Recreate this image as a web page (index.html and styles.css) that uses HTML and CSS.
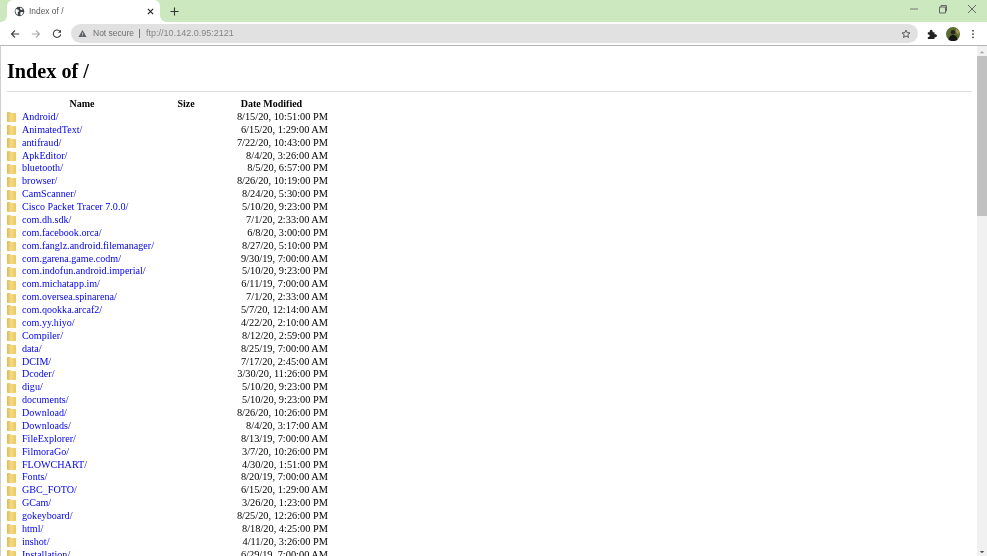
FILE: index.html
```html
<!DOCTYPE html>
<html lang="en">
<head>
<meta charset="utf-8">
<title>Index of /</title>
<link rel="stylesheet" href="styles.css">
</head>
<body>
<svg class="defs" width="0" height="0" aria-hidden="true">
  <defs>
    <linearGradient id="fg" x1="0" y1="0" x2="1" y2="0">
      <stop offset="0" stop-color="#dfbb52"/>
      <stop offset="0.45" stop-color="#f3da88"/>
      <stop offset="1" stop-color="#ebc95f"/>
    </linearGradient>
    <symbol id="folder" viewBox="0 0 9 10">
      <path d="M0 .8C0 .3.3 0 .8 0h2.400l1 1H8.200c.5 0 .8.300.8.800V9.200c0 .5-.3.800-.8.800H.8C.3 10 0 9.700 0 9.200Z" fill="url(#fg)"/>
    </symbol>
  </defs>
</svg>
<div class="window">
  <header class="tabstrip">
    <div class="tab">
      <svg class="favicon" viewBox="0 0 12 12"><circle cx="6" cy="6" r="5.200" fill="#3c4043"/><path d="M2 3.200 5 4l.4 1.800L4 7 4.300 9.500 2.800 9 1.500 6ZM6.500 1.500 9.600 3 8.600 4.300 6.800 3.800ZM7.500 6.500h2.700L9 9.500 7.200 10.300 6.800 8Z" fill="#fff"/></svg>
      <span class="tab-title">Index of /</span>
      <svg class="tab-close" viewBox="0 0 8 8"><path d="M1 1l6 6M7 1 1 7" stroke="#222" stroke-width="1.300" fill="none"/></svg>
    </div>
    <svg class="new-tab" viewBox="0 0 10 10"><path d="M5 .5v9M.5 5h9" stroke="#333" stroke-width="1.200" fill="none"/></svg>
    <div class="win-controls">
      <svg viewBox="0 0 10 10"><path d="M1 5h8" stroke="#777" fill="none"/></svg>
      <svg viewBox="0 0 10 10"><path d="M1.500 3h6v6h-6ZM3 3V1.500h5.500V7H7.500" stroke="#666" fill="none"/></svg>
      <svg viewBox="0 0 10 10"><path d="M1 1l8 8M9 1l-8 8" stroke="#666" fill="none"/></svg>
    </div>
  </header>
  <nav class="toolbar">
    <svg class="nav-icon" viewBox="0 0 12 12"><path d="M11 6H2M6 1.800 1.800 6 6 10.200" stroke="#3c4043" stroke-width="1.300" fill="none"/></svg>
    <svg class="nav-icon" viewBox="0 0 12 12"><path d="M1 6h9M6 1.800 10.200 6 6 10.200" stroke="#a8a8a8" stroke-width="1.300" fill="none"/></svg>
    <svg class="nav-icon" viewBox="0 0 12 12"><path d="M10 3.500A4.500 4.500 0 1 0 10.500 6.500" stroke="#3c4043" stroke-width="1.300" fill="none"/><path d="M10.800 1v3.600H7.200Z" fill="#3c4043"/></svg>
    <div class="omnibox">
      <svg class="warn" viewBox="0 0 10 10"><path d="M5 1 9.500 9H.5Z" fill="#5f6368"/><path d="M5 4v2.500M5 7.200v.9" stroke="#e2e2e2" stroke-width=".8"/></svg>
      <span class="not-secure">Not secure</span>
      <span class="divider"></span>
      <span class="url">ftp://10.142.0.95:2121</span>
      <svg class="star" viewBox="0 0 12 12"><path d="M6 1.300 7.400 4.400l3.400.3-2.600 2.200.8 3.300L6 8.400 3 10.200l.8-3.300L1.200 4.700l3.400-.3Z" stroke="#3c4043" fill="none"/></svg>
    </div>
    <svg class="puzzle" viewBox="0 0 12 12"><path d="M1 4h2.200C3 2 4 1 5 1s2 1 1.800 3H9v2.200c2-.2 3 .6 3 1.800s-1 2-3 1.800V12H1V9.500c1.500.2 2.200-.5 2.200-1.500S2.500 6.300 1 6.500Z" fill="#222"/></svg>
    <svg class="avatar" viewBox="0 0 14 14"><circle cx="7" cy="7" r="7" fill="#5c6b2f"/><path d="M2.500 13C3 9 5 8 7 8s4 1 4.500 5L7 14.500Z" fill="#161616"/><circle cx="7" cy="5.200" r="2.200" fill="#27231f"/><path d="M10 1.500 13 4 12.500 8 10 5Z" fill="#a39a4a"/></svg>
    <svg class="menu" viewBox="0 0 4 12"><circle cx="2" cy="2" r="1.050" fill="#333"/><circle cx="2" cy="6" r="1.050" fill="#333"/><circle cx="2" cy="10" r="1.050" fill="#333"/></svg>
  </nav>
  <div class="viewport">
    <main class="content">
      <h1 class="title">Index of /</h1>
      <hr class="rule">
      <div class="listing">
        <div class="row head"><span class="name-h">Name</span><span class="size-h">Size</span><span class="date-h">Date Modified</span></div>
        <div class="row"><span class="name"><svg class="folder"><use href="#folder"/></svg><a href="#">Android/</a></span><span></span><span class="date">8/15/20, 10:51:00 PM</span></div>
        <div class="row"><span class="name"><svg class="folder"><use href="#folder"/></svg><a href="#">AnimatedText/</a></span><span></span><span class="date">6/15/20, 1:29:00 AM</span></div>
        <div class="row"><span class="name"><svg class="folder"><use href="#folder"/></svg><a href="#">antifraud/</a></span><span></span><span class="date">7/22/20, 10:43:00 PM</span></div>
        <div class="row"><span class="name"><svg class="folder"><use href="#folder"/></svg><a href="#">ApkEditor/</a></span><span></span><span class="date">8/4/20, 3:26:00 AM</span></div>
        <div class="row"><span class="name"><svg class="folder"><use href="#folder"/></svg><a href="#">bluetooth/</a></span><span></span><span class="date">8/5/20, 6:57:00 PM</span></div>
        <div class="row"><span class="name"><svg class="folder"><use href="#folder"/></svg><a href="#">browser/</a></span><span></span><span class="date">8/26/20, 10:19:00 PM</span></div>
        <div class="row"><span class="name"><svg class="folder"><use href="#folder"/></svg><a href="#">CamScanner/</a></span><span></span><span class="date">8/24/20, 5:30:00 PM</span></div>
        <div class="row"><span class="name"><svg class="folder"><use href="#folder"/></svg><a href="#">Cisco Packet Tracer 7.0.0/</a></span><span></span><span class="date">5/10/20, 9:23:00 PM</span></div>
        <div class="row"><span class="name"><svg class="folder"><use href="#folder"/></svg><a href="#">com.dh.sdk/</a></span><span></span><span class="date">7/1/20, 2:33:00 AM</span></div>
        <div class="row"><span class="name"><svg class="folder"><use href="#folder"/></svg><a href="#">com.facebook.orca/</a></span><span></span><span class="date">6/8/20, 3:00:00 PM</span></div>
        <div class="row"><span class="name"><svg class="folder"><use href="#folder"/></svg><a href="#">com.fanglz.android.filemanager/</a></span><span></span><span class="date">8/27/20, 5:10:00 PM</span></div>
        <div class="row"><span class="name"><svg class="folder"><use href="#folder"/></svg><a href="#">com.garena.game.codm/</a></span><span></span><span class="date">9/30/19, 7:00:00 AM</span></div>
        <div class="row"><span class="name"><svg class="folder"><use href="#folder"/></svg><a href="#">com.indofun.android.imperial/</a></span><span></span><span class="date">5/10/20, 9:23:00 PM</span></div>
        <div class="row"><span class="name"><svg class="folder"><use href="#folder"/></svg><a href="#">com.michatapp.im/</a></span><span></span><span class="date">6/11/19, 7:00:00 AM</span></div>
        <div class="row"><span class="name"><svg class="folder"><use href="#folder"/></svg><a href="#">com.oversea.spinarena/</a></span><span></span><span class="date">7/1/20, 2:33:00 AM</span></div>
        <div class="row"><span class="name"><svg class="folder"><use href="#folder"/></svg><a href="#">com.qookka.arcaf2/</a></span><span></span><span class="date">5/7/20, 12:14:00 AM</span></div>
        <div class="row"><span class="name"><svg class="folder"><use href="#folder"/></svg><a href="#">com.yy.hiyo/</a></span><span></span><span class="date">4/22/20, 2:10:00 AM</span></div>
        <div class="row"><span class="name"><svg class="folder"><use href="#folder"/></svg><a href="#">Compiler/</a></span><span></span><span class="date">8/12/20, 2:59:00 PM</span></div>
        <div class="row"><span class="name"><svg class="folder"><use href="#folder"/></svg><a href="#">data/</a></span><span></span><span class="date">8/25/19, 7:00:00 AM</span></div>
        <div class="row"><span class="name"><svg class="folder"><use href="#folder"/></svg><a href="#">DCIM/</a></span><span></span><span class="date">7/17/20, 2:45:00 AM</span></div>
        <div class="row"><span class="name"><svg class="folder"><use href="#folder"/></svg><a href="#">Dcoder/</a></span><span></span><span class="date">3/30/20, 11:26:00 PM</span></div>
        <div class="row"><span class="name"><svg class="folder"><use href="#folder"/></svg><a href="#">digu/</a></span><span></span><span class="date">5/10/20, 9:23:00 PM</span></div>
        <div class="row"><span class="name"><svg class="folder"><use href="#folder"/></svg><a href="#">documents/</a></span><span></span><span class="date">5/10/20, 9:23:00 PM</span></div>
        <div class="row"><span class="name"><svg class="folder"><use href="#folder"/></svg><a href="#">Download/</a></span><span></span><span class="date">8/26/20, 10:26:00 PM</span></div>
        <div class="row"><span class="name"><svg class="folder"><use href="#folder"/></svg><a href="#">Downloads/</a></span><span></span><span class="date">8/4/20, 3:17:00 AM</span></div>
        <div class="row"><span class="name"><svg class="folder"><use href="#folder"/></svg><a href="#">FileExplorer/</a></span><span></span><span class="date">8/13/19, 7:00:00 AM</span></div>
        <div class="row"><span class="name"><svg class="folder"><use href="#folder"/></svg><a href="#">FilmoraGo/</a></span><span></span><span class="date">3/7/20, 10:26:00 PM</span></div>
        <div class="row"><span class="name"><svg class="folder"><use href="#folder"/></svg><a href="#">FLOWCHART/</a></span><span></span><span class="date">4/30/20, 1:51:00 PM</span></div>
        <div class="row"><span class="name"><svg class="folder"><use href="#folder"/></svg><a href="#">Fonts/</a></span><span></span><span class="date">8/20/19, 7:00:00 AM</span></div>
        <div class="row"><span class="name"><svg class="folder"><use href="#folder"/></svg><a href="#">GBC_FOTO/</a></span><span></span><span class="date">6/15/20, 1:29:00 AM</span></div>
        <div class="row"><span class="name"><svg class="folder"><use href="#folder"/></svg><a href="#">GCam/</a></span><span></span><span class="date">3/26/20, 1:23:00 PM</span></div>
        <div class="row"><span class="name"><svg class="folder"><use href="#folder"/></svg><a href="#">gokeyboard/</a></span><span></span><span class="date">8/25/20, 12:26:00 PM</span></div>
        <div class="row"><span class="name"><svg class="folder"><use href="#folder"/></svg><a href="#">html/</a></span><span></span><span class="date">8/18/20, 4:25:00 PM</span></div>
        <div class="row"><span class="name"><svg class="folder"><use href="#folder"/></svg><a href="#">inshot/</a></span><span></span><span class="date">4/11/20, 3:26:00 PM</span></div>
        <div class="row"><span class="name"><svg class="folder"><use href="#folder"/></svg><a href="#">Installation/</a></span><span></span><span class="date">6/29/19, 7:00:00 AM</span></div>
      </div>
    </main>
    <aside class="scrollbar">
      <svg class="arrow" viewBox="0 0 8 5"><path d="M4 1 7 4H1Z" fill="#a3a3a3"/></svg>
      <div class="thumb"></div>
      <svg class="arrow down" viewBox="0 0 8 5"><path d="M4 4 7 1H1Z" fill="#505050"/></svg>
    </aside>
  </div>
</div>
</body>
</html>
```

FILE: styles.css
```css
* { box-sizing: border-box; }
html, body { margin: 0; height: 100%; overflow: hidden; background: #fff; }
.defs { position: absolute; }
.window { display: flex; flex-direction: column; width: 987px; height: 556px; background: #fff; filter: blur(.3px); }

.tabstrip { flex: 0 0 22px; display: flex; align-items: flex-end; background: #cce8bf; padding-left: 7px; }
.tab { position: relative; width: 153px; height: 22px; background: #fff; border-radius: 6px 6px 0 0; display: flex; align-items: center; padding: 0 6px 0 7px; }
.tab::before, .tab::after { content: ""; position: absolute; bottom: 0; width: 6px; height: 6px; }
.tab::before { left: -6px; background: radial-gradient(circle at 0 0, #cce8bf 5.5px, #fff 6px); }
.tab::after { right: -6px; background: radial-gradient(circle at 100% 0, #cce8bf 5.5px, #fff 6px); }
.favicon { width: 11px; height: 11px; flex: none; }
.tab-title { margin-left: 4px; font: 8.400px/1 "Liberation Sans", sans-serif; color: #5a5a5a; flex: 1; }
.tab-close { width: 7px; height: 7px; }
.new-tab { width: 9px; height: 9px; margin: 0 0 6px 10px; }
.win-controls { margin-left: auto; align-self: flex-start; display: flex; gap: 19px; padding: 4px 10px 0 0; }
.win-controls svg { width: 10px; height: 10px; }

.toolbar { flex: 0 0 23px; display: flex; align-items: center; background: #fff; padding-left: 10px; }
.nav-icon { width: 10px; height: 10px; margin-right: 11px; flex: none; }
.omnibox { width: 847px; height: 19px; margin-left: -2px; background: #e1e1e1; border-radius: 10px; display: flex; align-items: center; padding: 0 7px; font: 9px/1 "Liberation Sans", sans-serif; }
.warn { width: 9px; height: 9px; flex: none; }
.not-secure { margin-left: 6px; color: #6e6e6e; font-size: 8.500px; }
.divider { width: 1px; height: 9px; background: #777; margin: 0 6px 0 5px; }
.url { color: #858585; }
.star { width: 10px; height: 10px; margin-left: auto; }
.puzzle { width: 10px; height: 10px; margin-left: 9px; flex: none; }
.avatar { width: 14px; height: 14px; margin-left: 9px; flex: none; }
.menu { width: 4px; height: 10px; margin-left: 11px; flex: none; }

.viewport { flex: 1; min-height: 0; display: flex; border-top: 1px solid #b4b4b4; border-left: 1px solid #cfcfcf; }
.content { flex: 1; min-width: 0; overflow: hidden; padding: 0 5px 0 6px; font-family: "Liberation Serif", serif; }
.title { margin: 13px 0 0; font: 700 20.200px/24px "Liberation Serif", serif; color: #000; }
.rule { margin: 8px 0 6px; height: 1px; border: 0; background: #dedede; }

.listing { display: grid; grid-auto-rows: 12.880px; width: 321px; font-size: 10.350px; line-height: 12.880px; }
.row { display: grid; grid-template-columns: 150px 58px 113px; white-space: nowrap; }
.head { font-weight: 700; color: #000; text-align: center; font-size: 10px; }
.name { display: flex; align-items: center; }
.name a { color: #0000ee; text-decoration: none; font-size: 10.100px; }
.folder { width: 9px; height: 10px; margin-right: 6px; flex: none; }
.date { text-align: right; color: #000; }

.scrollbar { flex: 0 0 10px; display: flex; flex-direction: column; background: #f1f1f1; align-items: center; }
.arrow { width: 6px; height: 4px; margin-top: 4px; flex: none; }
.thumb { width: 100%; height: 160px; margin-top: 2px; background: #c1c1c1; }
.arrow.down { margin-top: auto; margin-bottom: 2px; }
```
